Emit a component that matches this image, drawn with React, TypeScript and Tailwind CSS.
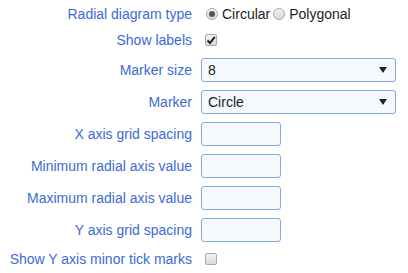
import React from "react";

const labelCls =
  "w-[192px] shrink-0 text-right text-[14px] text-[#3d6ad6] leading-none";

const Radio = ({ checked }: { checked?: boolean }) => (
  <span className="w-[12px] h-[12px] rounded-full border border-[#a9a9a9] bg-gradient-to-b from-[#f4f4f4] to-[#d9d9d9] flex items-center justify-center">
    {checked && <span className="w-[6px] h-[6px] rounded-full bg-[#555]" />}
  </span>
);

const Check = ({ checked }: { checked?: boolean }) => (
  <span className="w-[12px] h-[12px] rounded-[2px] border border-[#a9a9a9] bg-gradient-to-b from-[#f2f2f2] to-[#dcdcdc] flex items-center justify-center">
    {checked && (
      <svg width="10" height="10" viewBox="0 0 10 10">
        <path d="M1.5 5.5 L4 8 L8.8 1.8" fill="none" stroke="#222" strokeWidth="2" />
      </svg>
    )}
  </span>
);

const Select = ({ value }: { value: string }) => (
  <div className="w-[195px] h-[24px] rounded-[3px] border border-[#86a8e4] bg-[#f5f9fd] flex items-center justify-between pl-[6px] pr-[8px] text-[14px] text-[#222]">
    <span>{value}</span>
    <svg width="8" height="6" viewBox="0 0 8 6">
      <path d="M0 0 H8 L4 6 Z" fill="#222" />
    </svg>
  </div>
);

const TextBox = () => (
  <div className="w-[80px] h-[24px] rounded-[3px] border border-[#86a8e4] bg-[#f5f9fd]" />
);

const inputs = [
  "X axis grid spacing",
  "Minimum radial axis value",
  "Maximum radial axis value",
  "Y axis grid spacing",
];

export default function App() {
  return (
    <div
      className="w-[408px] h-[273px] bg-white flex flex-col"
      style={{ fontFamily: '"Liberation Sans", Arial, sans-serif' }}
    >
      <div className="h-[28px] flex items-center">
        <span className={labelCls}>Radial diagram type</span>
        <div className="ml-[14px] flex items-center text-[14px] text-[#222]">
          <Radio checked />
          <span className="ml-[4px]">Circular</span>
          <span className="ml-[3px]"><Radio /></span>
          <span className="ml-[4px]">Polygonal</span>
        </div>
      </div>
      <div className="h-[24px] flex items-center">
        <span className={labelCls}>Show labels</span>
        <span className="ml-[13px]"><Check checked /></span>
      </div>
      <div className="mt-[6px] h-[24px] flex items-center">
        <span className={labelCls}>Marker size</span>
        <div className="ml-[9px]"><Select value="8" /></div>
      </div>
      <div className="mt-[8px] h-[24px] flex items-center">
        <span className={labelCls}>Marker</span>
        <div className="ml-[9px]"><Select value="Circle" /></div>
      </div>
      {inputs.map((l) => (
        <div key={l} className="mt-[8px] h-[24px] flex items-center">
          <span className={labelCls}>{l}</span>
          <div className="ml-[9px]"><TextBox /></div>
        </div>
      ))}
      <div className="mt-[5px] h-[24px] flex items-center">
        <span className={labelCls}>Show Y axis minor tick marks</span>
        <span className="ml-[13px]"><Check /></span>
      </div>
    </div>
  );
}
